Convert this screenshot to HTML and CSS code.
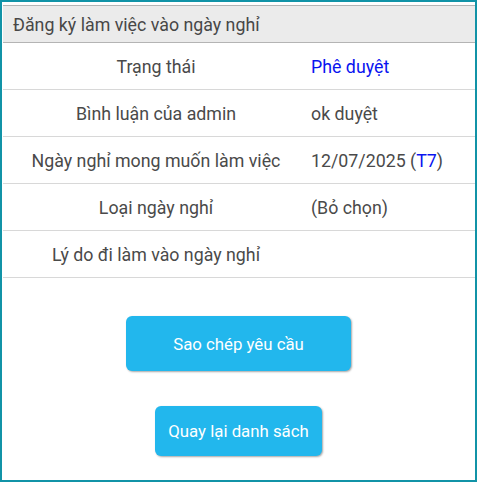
FILE: index.html
```html
<!DOCTYPE html>
<html lang="vi">
<head>
<meta charset="utf-8">
<link rel="stylesheet" href="styles.css">
</head>
<body>
<div class="frame">
  <div class="panel">
    <div class="head">Đăng ký làm việc vào ngày nghỉ</div>
    <div class="row"><div class="label">Trạng thái</div><div class="value approved">Phê duyệt</div></div>
    <div class="row"><div class="label">Bình luận của admin</div><div class="value">ok duyệt</div></div>
    <div class="row"><div class="label">Ngày nghỉ mong muốn làm việc</div><div class="value">12/07/2025 (<span class="day">T7</span>)</div></div>
    <div class="row"><div class="label">Loại ngày nghỉ</div><div class="value">(Bỏ chọn)</div></div>
    <div class="row"><div class="label">Lý do đi làm vào ngày nghỉ</div><div class="value"></div></div>
  </div>
  <div class="actions">
    <button class="btn btn-copy">Sao chép yêu cầu</button>
    <button class="btn btn-back">Quay lại danh sách</button>
  </div>
</div>
</body>
</html>
```
FILE: styles.css
```css
html, body {
  margin: 0;
  padding: 0;
  background: #ffffff;
}
.frame {
  box-sizing: border-box;
  width: 477px;
  height: 482px;
  border: 2px solid #1193a7;
  font-family: Roboto, "Noto Sans", sans-serif;
  font-size: 17.8px;
  color: #4a4a4a;
  display: flex;
  flex-direction: column;
}
.panel {
  margin-top: 3px;
  padding-left: 1px;
}
.head {
  box-sizing: border-box;
  height: 38px;
  background: #ebebeb;
  border-top: 1px solid #b4b4b4;
  border-bottom: 1px solid #b4b4b4;
  padding-left: 10px;
  display: flex;
  align-items: center;
  color: #474747;
}
.row {
  display: flex;
  height: 47px;
  box-sizing: border-box;
  border-bottom: 1px solid #d8d8d8;
  align-items: center;
}
.label {
  width: 306px;
  text-align: center;
}
.value {
  padding-left: 2px;
}
.approved, .day {
  color: #0a14f0;
}
.actions {
  display: flex;
  flex-direction: column;
  align-items: center;
  padding-top: 38px;
  gap: 35px;
}
.btn {
  border: none;
  border-radius: 6px;
  background: #22b7ed;
  color: #ffffff;
  font-family: Roboto, "Noto Sans", sans-serif;
  font-size: 16.8px;
  box-shadow: 1px 1px 2px rgba(0, 0, 0, 0.35);
  padding: 0;
}
.btn-copy {
  width: 225px;
  height: 55px;
}
.btn-back {
  width: 167px;
  height: 50px;
}
```
